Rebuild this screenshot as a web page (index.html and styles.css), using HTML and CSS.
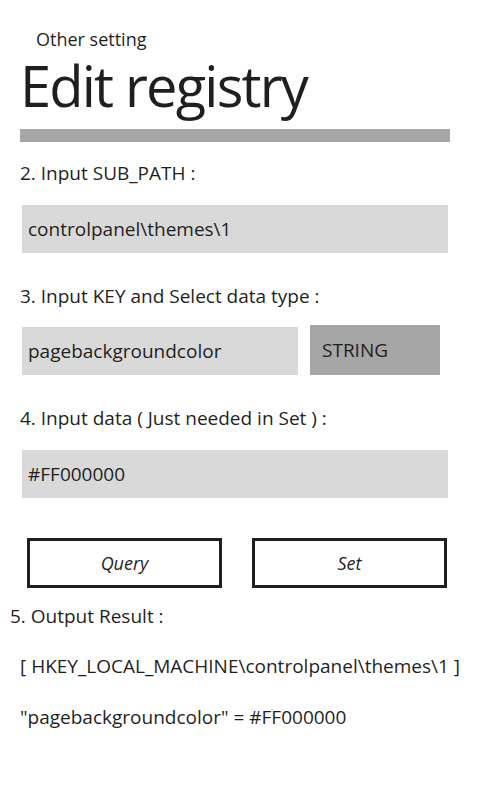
FILE: index.html
```html
<!DOCTYPE html>
<html>
<head>
<meta charset="utf-8">
<link rel="stylesheet" href="styles.css">
</head>
<body>
<div class="page">
  <div class="app-title">Other setting</div>
  <h1 class="page-title">Edit registry</h1>
  <div class="progress"></div>

  <div class="label first">2. Input SUB_PATH :</div>
  <div class="field wide">controlpanel\themes\1</div>

  <div class="label">3. Input KEY and Select data type :</div>
  <div class="row">
    <div class="field key">pagebackgroundcolor</div>
    <div class="picker">STRING</div>
  </div>

  <div class="label">4. Input data ( Just needed in Set ) :</div>
  <div class="field wide">#FF000000</div>

  <div class="buttons">
    <div class="btn">Query</div>
    <div class="btn">Set</div>
  </div>

  <div class="label out-label">5. Output Result :</div>
  <div class="out">[ HKEY_LOCAL_MACHINE\controlpanel\themes\1 ]</div>
  <div class="out">"pagebackgroundcolor" = #FF000000</div>
</div>
</body>
</html>
```

FILE: styles.css
```css
html, body {
  margin: 0;
  padding: 0;
  background: #ffffff;
}
body {
  width: 480px;
  height: 800px;
  overflow: hidden;
  font-family: "Open Sans", "Noto Sans", sans-serif;
  color: #1f1f1f;
}
.page {
  display: flex;
  flex-direction: column;
  padding-top: 26px;
}
.app-title {
  margin-left: 36px;
  font-size: 18px;
  line-height: 26px;
}
.page-title {
  margin: 0 0 0 20px;
  font-weight: 400;
  font-size: 56px;
  line-height: 66px;
  letter-spacing: -1.8px;
}
.progress {
  margin: 11px 0 0 20px;
  width: 430px;
  height: 13px;
  background: #a6a6a6;
}
.label {
  margin: 30px 0 0 20px;
  font-size: 19px;
  line-height: 26px;
}
.label.first {
  margin-top: 18px;
}
.field {
  box-sizing: border-box;
  height: 48px;
  background: #d9d9d9;
  padding-left: 6px;
  font-size: 19px;
  line-height: 48px;
}
.wide {
  margin: 19px 0 0 22px;
  width: 426px;
}
.row {
  display: flex;
  align-items: flex-end;
  gap: 12px;
  margin: 16px 0 0 22px;
}
.key {
  width: 276px;
}
.picker {
  box-sizing: border-box;
  width: 130px;
  height: 50px;
  background: #a6a6a6;
  padding-left: 12px;
  font-size: 19px;
  line-height: 50px;
}
.buttons {
  display: flex;
  gap: 30px;
  margin: 40px 0 0 27px;
}
.btn {
  box-sizing: border-box;
  width: 195px;
  height: 50px;
  border: 3px solid #1f1f1f;
  text-align: center;
  font-style: italic;
  font-size: 18px;
  line-height: 44px;
}
.out-label {
  margin: 15px 0 0 10px;
}
.out {
  margin: 24px 0 0 20px;
  font-size: 19px;
  line-height: 26px;
}
.out + .out {
  margin-top: 25px;
}
```
